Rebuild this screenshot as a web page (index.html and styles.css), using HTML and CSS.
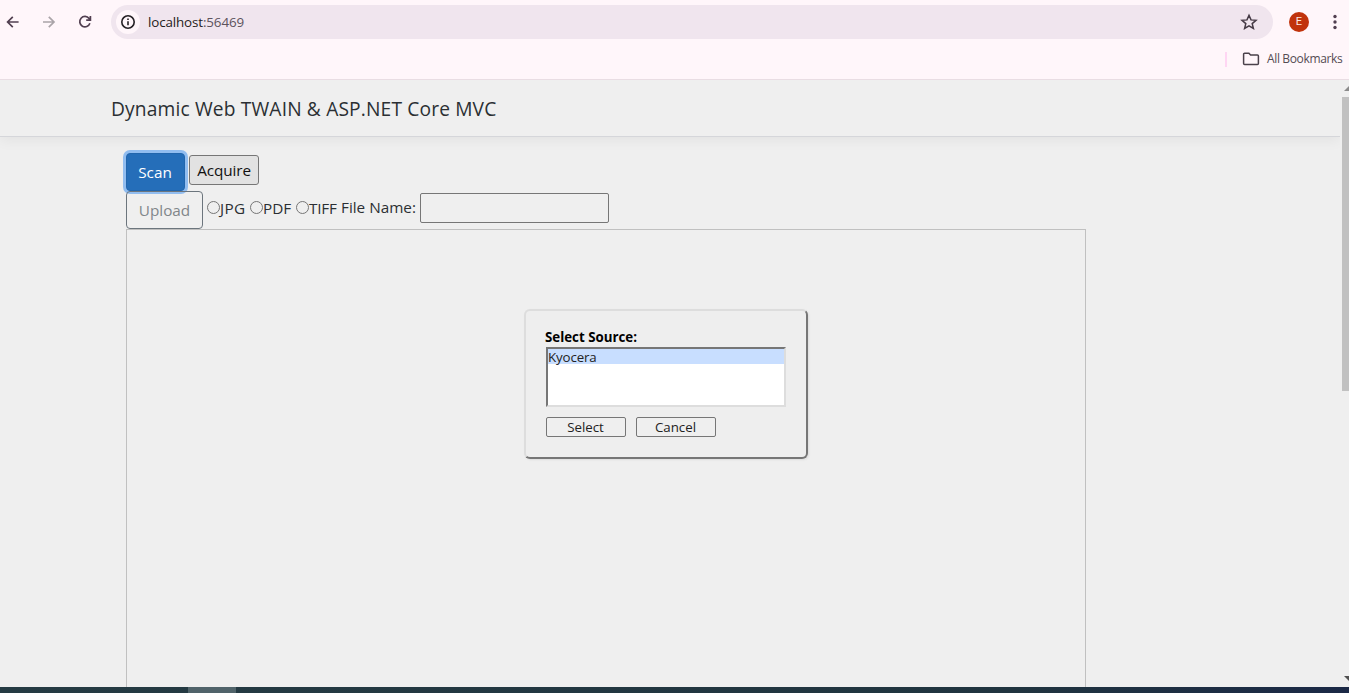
FILE: index.html
```html
<!DOCTYPE html>
<html lang="en">
<head>
<meta charset="utf-8">
<title>Dynamic Web TWAIN</title>
<link rel="stylesheet" href="styles.css">
</head>
<body>
<div class="browser">
  <div class="toolbar">
    <svg class="nav back" width="14" height="14" viewBox="0 0 14 14"><path d="M12.6 7H1.8M6.8 1.8L1.6 7l5.2 5.2"/></svg>
    <svg class="nav forward" width="14" height="14" viewBox="0 0 14 14"><path d="M1 7h10.8M6.8 1.8L12 7l-5.200 5.200"/></svg>
    <svg class="nav reload" width="14" height="14" viewBox="0 0 14 14"><path d="M11.900 8.300A5.200 5.200 0 1 1 11.100 3.500L12.200 4.700M12.400 1v4.200H8.200"/></svg>
    <div class="address">
      <span class="info"><svg width="16" height="16" viewBox="0 0 16 16"><circle cx="8" cy="8" r="6.200"/><path d="M8 7.200v4M8 4.400v1.600"/></svg></span>
      <span class="url">localhost<i>:56469</i></span>
      <svg class="star" width="18" height="18" viewBox="0 0 18 18"><path d="M9 2.300l2 4.600 5 .4-3.800 3.300 1.200 4.900L9 12.900l-4.400 2.600 1.200-4.900L2 7.300l5-.4z"/></svg>
    </div>
    <span class="avatar">E</span>
    <svg class="dots" width="4" height="16" viewBox="0 0 4 16"><circle cx="2" cy="2.500" r="1.700"/><circle cx="2" cy="8" r="1.700"/><circle cx="2" cy="13.500" r="1.700"/></svg>
  </div>
  <div class="bookmarks">
    <span class="divider"></span>
    <svg class="folder" width="18" height="14" viewBox="0 0 18 14"><path d="M2.600 1.200h4.300l1.700 1.800h6.800c.6 0 1 .4 1 1v7.400c0 .6-.4 1-1 1H2.600c-.6 0-1-.4-1-1V2.200c0-.6.4-1 1-1z"/></svg>
    <span class="bookmark-label">All Bookmarks</span>
  </div>
</div>
<div class="viewport">
  <div class="page">
    <header class="site-header"><span class="brand">Dynamic Web TWAIN &amp; ASP.NET Core MVC</span></header>
    <main class="content">
      <div class="row scan-row">
        <button class="scan"><span>Scan</span></button>
        <button class="acquire"><span>Acquire</span></button>
      </div>
      <div class="row upload-row">
        <button class="upload"><span>Upload</span></button>
        <label class="choice jpg"><b></b><span>JPG</span></label>
        <label class="choice pdf"><b></b><span>PDF</span></label>
        <label class="choice tiff"><b></b><span>TIFF</span></label>
        <span class="file-label">File Name:</span>
        <input class="file-name" type="text">
      </div>
      <div class="viewer">
        <section class="dialog">
          <div class="dialog-title"><span>Select Source:</span></div>
          <div class="sources"><div class="source"><span>Kyocera</span></div></div>
          <div class="actions"><button><span class="select-text">Select</span></button><button><span class="cancel-text">Cancel</span></button></div>
        </section>
      </div>
    </main>
  </div>
  <div class="scrollbar">
    <svg width="7" height="17" viewBox="0 0 7 17"><path d="M2 11l5-5v5z" fill="#8b8b8b"/></svg>
    <div class="thumb"></div>
    <svg class="down" width="7" height="17" viewBox="0 0 7 17"><path d="M2 6h5v5z" fill="#505050"/></svg>
  </div>
</div>
<footer class="taskbar"><span class="task"></span></footer>
</body>
</html>
```
FILE: styles.css
```css
* { box-sizing: border-box; }
body {
  margin: 0;
  width: 1349px;
  height: 693px;
  overflow: hidden;
  display: flex;
  flex-direction: column;
  background: #efefef;
  color: #2b2f33;
  font-family: "Open Sans", "Noto Sans", sans-serif;
  font-size: 15.3px;
}
svg { display: block; flex: none; }
span { white-space: nowrap; }
button { font: inherit; margin: 0; padding: 0; display: flex; align-items: center; justify-content: center; }

.browser { height: 80px; flex: none; background: #fff6fa; border-bottom: 1px solid #e9dde3; }
.toolbar { height: 44px; display: flex; align-items: center; padding: 0 12px 0 6px; }
.nav { fill: none; stroke: #513f50; stroke-width: 1.7; }
.forward { stroke: #aaa4a8; margin-left: 22px; }
.reload { margin-left: 22px; }
.back + .forward + .reload { margin-right: 19px; }
.address { width: 1162px; height: 34px; border-radius: 17px; background: #f0e5ee; display: flex; align-items: center; padding: 0 15px 0 5px; }
.info { width: 24px; height: 24px; border-radius: 50%; background: #fff6fa; display: grid; place-items: center; }
.info svg { fill: none; stroke: #242024; stroke-width: 1.6; }
.url { margin-left: 8px; font-size: 13.4px; letter-spacing: -.13px; color: #1f1b20; }
.url i { font-style: normal; color: #5c535c; }
.star { margin-left: auto; fill: none; stroke: #453a45; stroke-width: 1.5; }
.avatar { margin-left: 16px; width: 20px; height: 20px; border-radius: 50%; background: #c1330c; color: #fbe9e4; font: 11px/20px Roboto, sans-serif; text-align: center; }
.dots { margin-left: auto; fill: #513f50; }
.bookmarks { height: 30px; display: flex; align-items: center; justify-content: flex-end; padding-right: 7px; }
.divider { width: 2px; height: 15px; background: #ffd6f3; }
.folder { margin: 0 7px 0 15px; fill: none; stroke: #4a414a; stroke-width: 1.5; }
.bookmark-label { width: 75px; line-height: 16px; margin-top: -1px; font-size: 12px; letter-spacing: -.36px; color: #544c53; }

.viewport { height: 607px; flex: none; display: flex; overflow: hidden; }
.page { width: 1340px; flex: none; overflow: hidden; }
.site-header { height: 57px; padding-left: 111px; display: flex; align-items: center; border-bottom: 1px solid #d5d6da; box-shadow: 0 4px 12px rgba(0, 0, 0, .05); }
.brand { font-size: 19.2px; letter-spacing: .15px; }
.content { padding: 16px 0 0 126px; }
.row { display: flex; }
.scan-row { height: 38px; }
.scan { width: 59px; height: 38px; border: 1px solid #2266ad; border-radius: 4px; background: #256eb9; color: #fff; box-shadow: 0 0 0 3px #91bdf0; padding-right: 1px; }
.acquire { margin: 2px 0 0 4px; width: 70px; height: 30px; border: 1px solid #767676; border-radius: 3px; background: #e2e2e2; color: #111; letter-spacing: -.1px; }
.upload-row { height: 38px; }
.upload { width: 77px; height: 38px; border: 1px solid #6c757d; border-radius: 4px; background: transparent; color: #81868a; }
.choice { height: 33px; display: flex; align-items: center; }
.choice b { width: 13px; height: 13px; flex: none; border: 1px solid #767676; border-radius: 50%; }
.jpg { margin-left: 4px; width: 43px; letter-spacing: .3px; }
.pdf { width: 46px; }
.tiff { width: 45px; letter-spacing: -.2px; }
.file-label { width: 79px; line-height: 33px; }
.file-name { width: 189px; height: 30px; margin: 2px 0 0; border: 1px solid #767676; border-radius: 2px; background: transparent; }
.viewer { width: 960px; height: 500px; border: 1px solid #c0c0c0; padding: 79px 0 0 397px; }

.dialog { width: 284px; height: 150px; padding: 17px 20px; border: 2px solid; border-color: #ddd #767676 #767676 #ddd; border-radius: 6px; background: #eee; box-shadow: 1px 1px 2px #ddd; color: #222; font-size: 13.3px; letter-spacing: -.12px; }
.dialog-title { height: 19px; line-height: 19px; margin-left: -1px; font-weight: 700; color: #000; font-size: 13.3px; letter-spacing: 0; }
.sources { width: 240px; height: 60px; border: 2px solid; border-color: #767676 #ddd #ddd #767676; background: #fff; }
.source { height: 15px; line-height: 16px; background: #c8deff; }
.actions { display: flex; gap: 10px; margin-top: 10px; }
.actions button { width: 80px; height: 20px; border: 1px solid #767676; border-radius: 2px; background: #efefef; color: #222; padding-right: 1px; }
.scrollbar { width: 9px; display: flex; flex-direction: column; align-items: flex-end; background: #efefef; }
.thumb { width: 7px; height: 294px; background: #c1c1c1; }
.down { margin-top: auto; }
.taskbar { height: 6px; flex: none; padding-left: 188px; background: linear-gradient(90deg, #253b43 0%, #20343f 75%, #1b2946 100%); }
.task { display: block; width: 48px; height: 6px; background: #50636a; }
```
